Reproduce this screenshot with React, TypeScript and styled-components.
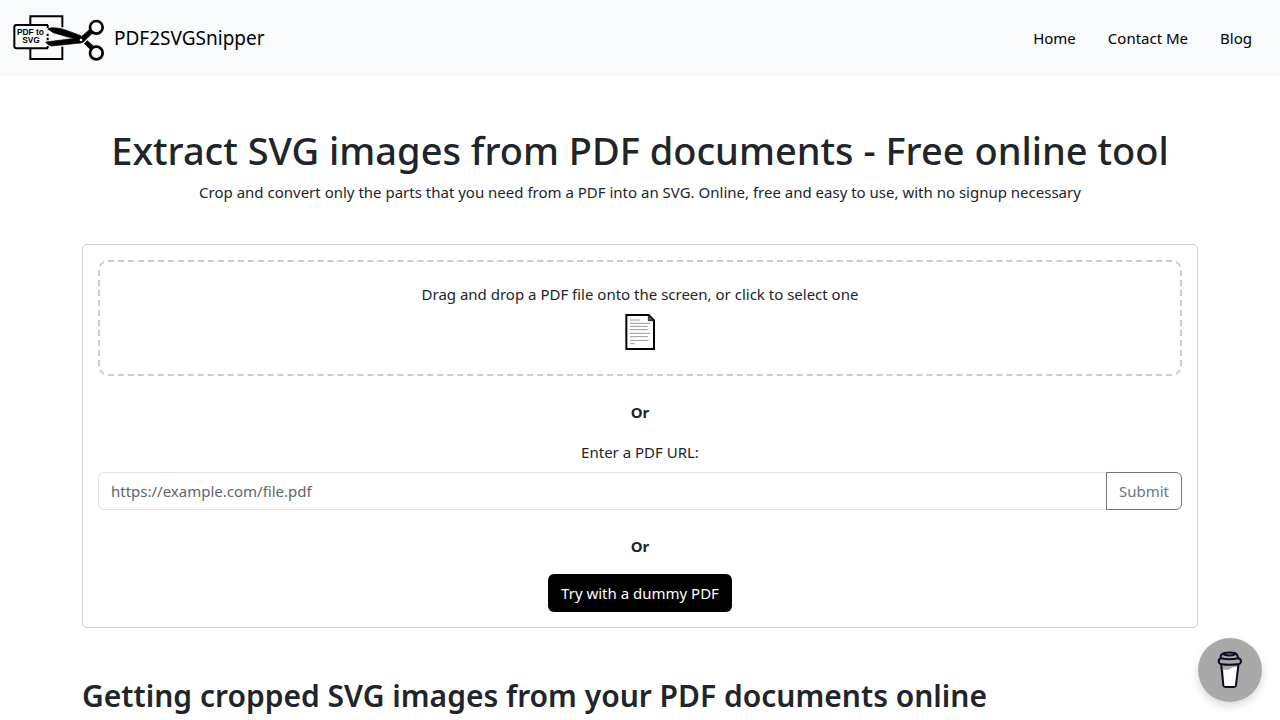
import React from "react";
import styled, { createGlobalStyle } from "styled-components";

const GlobalStyle = createGlobalStyle`
  *, *::before, *::after { box-sizing: border-box; }
  body {
    margin: 0;
    background: #fff;
    color: #212529;
    font-family: "Segoe UI", "Noto Sans", "Open Sans", sans-serif;
    font-size: 15px;
    line-height: 24px;
  }
  h1, h2, p { margin: 0; }
  button, input { font: inherit; }
`;

const Navbar = styled.header`
  display: flex;
  align-items: center;
  justify-content: space-between;
  min-height: 76px;
  padding: 0 12px;
  background: #f9fafc;
`;

const Brand = styled.a`
  display: flex;
  align-items: center;
  gap: 6px;
  color: #000;
  font-size: 19px;
  line-height: 30px;
  text-decoration: none;
`;

const NavLinks = styled.nav`
  display: flex;
`;

const NavLink = styled.a`
  padding: 8px 16px;
  color: #000;
  text-decoration: none;
`;

const Container = styled.main`
  max-width: 1140px;
  margin: 0 auto;
  padding: 50px 12px 0;
`;

const Intro = styled.section`
  text-align: center;
`;

const Title = styled.h1`
  margin-bottom: 6px;
  font-size: 38px;
  font-weight: 550;
  line-height: 48px;
`;

const Card = styled.section`
  display: flex;
  flex-direction: column;
  margin-top: 40px;
  padding: 15px;
  border: 1px solid #ccc;
  border-radius: 5px;
  text-align: center;
`;

const DropZone = styled.button`
  display: flex;
  flex-direction: column;
  align-items: center;
  gap: 6px;
  padding: 20px 20px 22px;
  border: 2px dashed #ccc;
  border-radius: 10px;
  background: none;
  color: inherit;
  cursor: pointer;
`;

const Divider = styled.p`
  margin: 24px 0 16px;
  font-weight: 700;
`;

const UrlForm = styled.form`
  display: flex;
  flex-direction: column;
  gap: 8px;
`;

const InputGroup = styled.div`
  display: flex;
`;

const UrlInput = styled.input`
  flex: 1;
  min-width: 0;
  height: 38px;
  padding: 6px 12px;
  border: 1px solid #dee2e6;
  border-right: 0;
  border-radius: 6px 0 0 6px;
  background: #fff;
  color: #212529;
  &::placeholder { color: #60666c; opacity: 1; }
`;

const SubmitButton = styled.button`
  width: 76px;
  height: 38px;
  padding: 0;
  border: 1px solid #6c757d;
  border-radius: 0 6px 6px 0;
  background: #fff;
  color: #6c757d;
`;

const DarkButton = styled.button`
  align-self: center;
  height: 38px;
  padding: 0 13px;
  border: 0;
  border-radius: 6px;
  background: #000;
  color: #fff;
`;

const SectionTitle = styled.h2`
  margin-top: 48px;
  font-size: 30px;
  font-weight: 600;
  line-height: 40px;
`;

const CoffeeButton = styled.button`
  position: fixed;
  right: 18px;
  bottom: 18px;
  display: flex;
  align-items: center;
  justify-content: center;
  width: 64px;
  height: 64px;
  padding: 0;
  border: 0;
  border-radius: 50%;
  background: #a9a9a9;
  box-shadow: 0 4px 8px rgba(0, 0, 0, 0.15);
  cursor: pointer;
`;

const Logo = () => (
  <svg width="96" height="52" viewBox="12 12 288 156" aria-hidden="true">
    <g fill="none" stroke="#000" strokeWidth="6">
      <path d="M67 49V25H163V58M163 116V153H67V122" />
      <path d="M120 51H25Q19 51 19 57V115Q19 121 25 121H120" />
      <path d="M119 51V60M119 77V84M119 89V97M119 114V121" />
    </g>
    <g fill="#000" stroke="#000" strokeWidth="2" strokeLinejoin="round">
      <path d="M119 63Q126 58 146 60Q156 61 170 65L219 83L213 93L180 87L136 74Z" />
      <path d="M113 102L208 90L220 86L244 65L254 75L234 94Q228 104 218 105L130 114Q119 112 113 102Z" />
      <path d="M229 107L238 98L255 113L246 123Z" />
    </g>
    <circle cx="219" cy="96" r="4" fill="#fff" />
    <g fill="none" stroke="#000" strokeWidth="8">
      <circle cx="265" cy="58" r="19" />
      <circle cx="265" cy="135" r="19" />
    </g>
    <g fontFamily="Liberation Sans, Arial, sans-serif" fontWeight="700" fontSize="25" textAnchor="middle">
      <text x="67" y="80">PDF to</text>
      <text x="69" y="105">SVG</text>
    </g>
  </svg>
);

const DocumentIcon = () => (
  <svg width="32" height="40" viewBox="72 96 96 120" aria-hidden="true">
    <path d="M79 105H146L162 121V207H79Z" fill="#fff" stroke="#000" strokeWidth="6" />
    <path d="M145 105V122H162Z" fill="#555" stroke="#000" strokeWidth="2" />
    <path
      d="M90 120H120M90 130H150M90 139H143M90 149H143M90 160H150M90 170H144M90 181H146M90 191H104"
      stroke="#999"
      strokeWidth="3"
    />
  </svg>
);

const CoffeeIcon = () => (
  <svg width="28" height="40" viewBox="108 90 84 120" aria-hidden="true">
    <path d="M130 148Q140 152 150 146Q158 140 171 140L166 197Q165 200 161 200H137Q133 200 132 197Z" fill="#fff" />
    <g fill="none" stroke="#0d0c22" strokeWidth="6" strokeLinecap="round" strokeLinejoin="round">
      <path d="M124 137L130 196Q131 201 136 201H162Q167 201 168 196L175 137" />
      <path d="M123 115Q148 121 175 115Q183 117 183 125Q181 133 172 133Q149 136 125 133Q116 132 116 124Q117 116 123 115Z" />
      <path d="M122 112Q121 102 134 99Q150 96 164 99Q172 101 174 114" />
      <path d="M132 104Q148 109 164 104" />
    </g>
  </svg>
);

export default function App() {
  return (
    <>
      <GlobalStyle />
      <Navbar>
        <Brand href="#home">
          <Logo />
          PDF2SVGSnipper
        </Brand>
        <NavLinks aria-label="Main">
          <NavLink href="#home">Home</NavLink>
          <NavLink href="#contact">Contact Me</NavLink>
          <NavLink href="#blog">Blog</NavLink>
        </NavLinks>
      </Navbar>
      <Container>
        <Intro>
          <Title>Extract SVG images from PDF documents - Free online tool</Title>
          <p>
            Crop and convert only the parts that you need from a PDF into an SVG. Online, free and easy to use, with no
            signup necessary
          </p>
        </Intro>
        <Card>
          <DropZone type="button">
            Drag and drop a PDF file onto the screen, or click to select one
            <DocumentIcon />
          </DropZone>
          <Divider>Or</Divider>
          <UrlForm onSubmit={(e) => e.preventDefault()}>
            <label htmlFor="pdf-url">Enter a PDF URL:</label>
            <InputGroup>
              <UrlInput id="pdf-url" type="url" placeholder="https://example.com/file.pdf" />
              <SubmitButton type="submit">Submit</SubmitButton>
            </InputGroup>
          </UrlForm>
          <Divider>Or</Divider>
          <DarkButton type="button">Try with a dummy PDF</DarkButton>
        </Card>
        <SectionTitle>Getting cropped SVG images from your PDF documents online</SectionTitle>
      </Container>
      <CoffeeButton type="button" aria-label="Buy me a coffee">
        <CoffeeIcon />
      </CoffeeButton>
    </>
  );
}
